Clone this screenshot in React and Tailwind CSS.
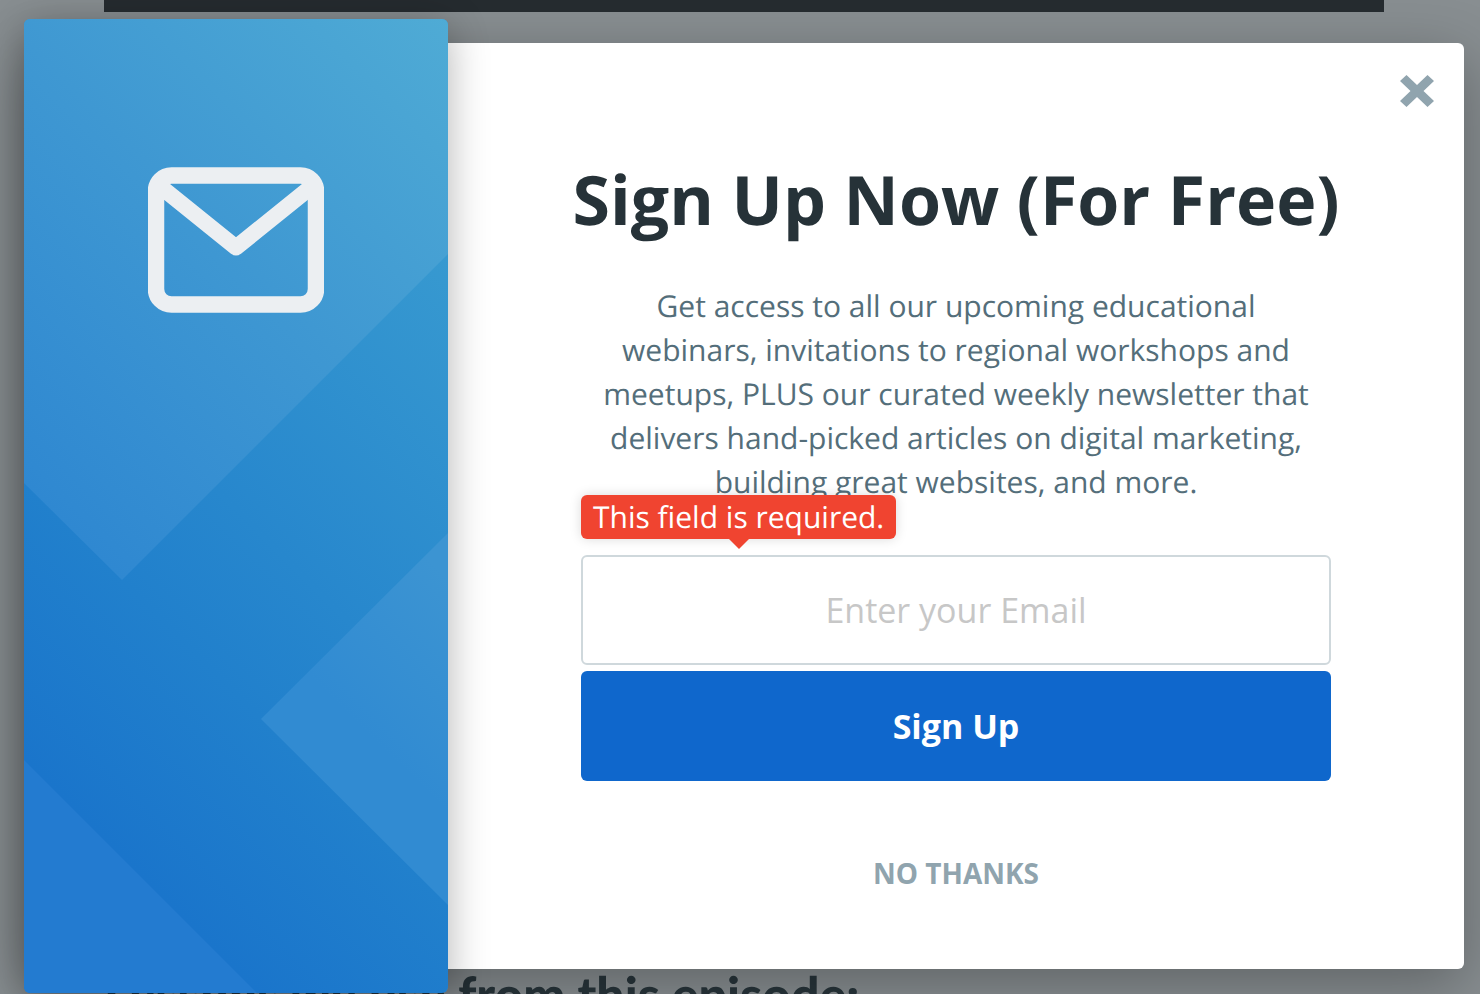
import { useId } from "react";

function PageBehind() {
  return (
    <div
      aria-hidden="true"
      className="col-start-1 row-start-1 flex h-0 min-h-full flex-col justify-between overflow-hidden pr-24 pl-[104px]"
    >
      <div className="h-3 bg-[#262c30]" />
      <h2 className="-mb-7 font-[Lato] text-[50px] leading-[56px] font-black whitespace-nowrap text-[#28353b]">
        Lessons we use from this episode:
      </h2>
    </div>
  );
}

function BrandPanel() {
  return (
    <div className="relative z-10 -my-6 grid overflow-clip rounded-md shadow-[0_8px_40px_rgba(0,0,0,0.3)]">
      <svg
        className="col-start-1 row-start-1 h-0 min-h-full w-full"
        viewBox="0 0 424 974"
        preserveAspectRatio="none"
        aria-hidden="true"
      >
        <defs>
          <linearGradient id="sky" gradientUnits="userSpaceOnUse" x1="424" y1="0" x2="-20" y2="444">
            <stop offset="0" stopColor="#4fabd5" />
            <stop offset="0.5" stopColor="#3f98d2" />
            <stop offset="1" stopColor="#2f88d1" />
          </linearGradient>
          <linearGradient id="sea" gradientUnits="userSpaceOnUse" x1="424" y1="240" x2="-38" y2="702">
            <stop offset="0" stopColor="#3799d0" />
            <stop offset="0.5" stopColor="#2787cd" />
            <stop offset="0.7" stopColor="#2180cc" />
            <stop offset="1" stopColor="#1a75cb" />
          </linearGradient>
          <linearGradient id="facet" gradientUnits="userSpaceOnUse" x1="424" y1="560" x2="307" y2="677">
            <stop offset="0" stopColor="#3c94d2" />
            <stop offset="1" stopColor="#318bd2" />
          </linearGradient>
        </defs>
        <rect width="424" height="974" fill="url(#sea)" />
        <path d="M0 0H424V235L98 561L0 464Z" fill="url(#sky)" />
        <path d="M424 514L237 700L424 886Z" fill="url(#facet)" />
        <path d="M0 741L233 974H0Z" fill="#237bd0" />
      </svg>
      <svg
        className="col-start-1 row-start-1 mt-[148px] h-[146px] w-44 justify-self-center"
        viewBox="0 0 176 146"
        fill="none"
        stroke="#eceff2"
        aria-hidden="true"
      >
        <rect x="8" y="8.500" width="160" height="129" rx="15.500" strokeWidth="16.500" />
        <path d="M8 16L88 80.500L168 16" strokeWidth="16" strokeLinejoin="round" />
      </svg>
    </div>
  );
}

function SignUpForm() {
  const emailId = useId();
  const errorId = useId();
  return (
    <form noValidate onSubmit={(e) => e.preventDefault()} className="mx-auto mt-[51px] flex w-full max-w-[750px] flex-col gap-1.5">
      <div className="relative flex">
        <label htmlFor={emailId} className="sr-only">
          Email
        </label>
        <input
          id={emailId}
          type="email"
          placeholder="Enter your Email"
          aria-invalid="true"
          aria-describedby={errorId}
          className="h-[110px] w-full rounded-md border-2 border-[#cfd8dc] bg-white text-center text-[34px] text-[#263238] outline-none placeholder:text-[#c7c7c7]"
        />
        <div
          id={errorId}
          role="alert"
          className="absolute bottom-full left-0 mb-4 rounded-md bg-[#f04430] px-3 text-[30px] leading-[44px] whitespace-nowrap text-white shadow-[0_0_12px_rgba(0,0,0,0.15)]"
        >
          This field is required.
          <span className="absolute top-full left-1/2 -translate-x-1/2 border-x-10 border-t-10 border-x-transparent border-t-[#f04430]" />
        </div>
      </div>
      <button type="submit" className="h-[110px] rounded-md bg-[#0f67cc] text-[34px] font-bold text-white">
        Sign Up
      </button>
    </form>
  );
}

export default function App() {
  return (
    <div className="grid min-h-screen overflow-hidden bg-[#888e91] font-['Open_Sans',sans-serif] [text-rendering:geometricPrecision]">
      <PageBehind />
      <div
        role="dialog"
        aria-modal="true"
        aria-labelledby="dialog-title"
        className="relative col-start-1 row-start-1 mt-[43px] mr-4 mb-[25px] ml-6 grid grid-cols-[424fr_1016fr] self-start rounded-md bg-white shadow-[0_16px_60px_rgba(0,0,0,0.3)]"
      >
        <BrandPanel />
        <div className="flex flex-col items-center px-8 pt-[116px] pb-[76px] text-center">
          <h1 id="dialog-title" className="text-[68px] leading-[80px] font-bold whitespace-nowrap text-[#263238]">
            Sign Up Now (For Free)
          </h1>
          <p className="mt-[45px] max-w-[720px] text-[30px] leading-[44px] text-[#546e7a]">
            Get access to all our upcoming educational webinars, invitations to regional workshops and meetups, PLUS our
            curated weekly newsletter that delivers hand-picked articles on digital marketing, building great websites,
            and more.
          </p>
          <SignUpForm />
          <button type="button" className="mt-[72px] text-[28px] leading-10 font-bold text-[#90a4ae]">
            NO THANKS
          </button>
        </div>
        <button type="button" aria-label="Close" className="absolute top-8 right-[30px]">
          <svg className="h-8 w-[34px]" viewBox="0 0 34 32" fill="#90a4ae" aria-hidden="true">
            <path d="M6.500 0L17 10L27.500 0L34 6L23.500 16L34 26L27.500 32L17 22L6.500 32L0 26L10.500 16L0 6Z" />
          </svg>
        </button>
      </div>
    </div>
  );
}
